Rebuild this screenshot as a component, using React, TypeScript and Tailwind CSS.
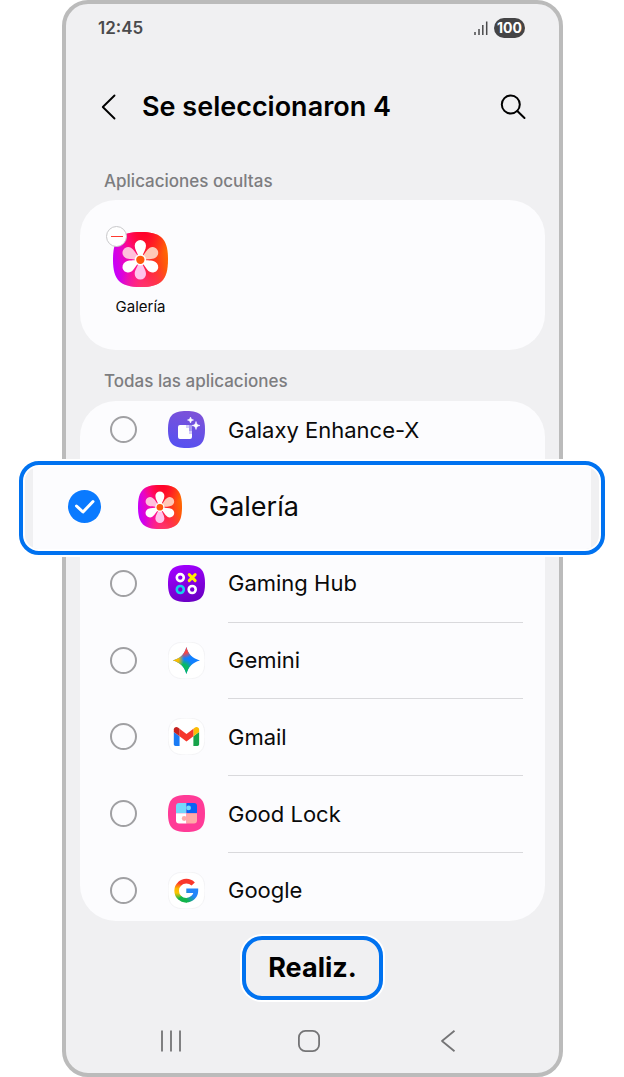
import type { ReactNode } from "react";

const SQUIRCLE =
  "M18.500 0C32.400 0 37 4.600 37 18.500S32.400 37 18.500 37 0 32.400 0 18.500 4.600 0 18.500 0Z";

function GalleryIcon({ id, className }: { id: string; className: string }) {
  const petal = "M-1.200 -1.500C-1.500 -4.500 -3.800 -6.600 -3.800 -9.500A3.800 3.800 0 0 1 3.800 -9.500C3.800 -6.600 1.500 -4.500 1.200 -1.500Z";
  return (
    <svg viewBox="0 0 37 37" className={className} aria-hidden="true">
      <defs>
        <linearGradient id={`${id}-base`} x1="0" y1="0.6" x2="1" y2="0.4">
          <stop offset="0" stopColor="#c400ff" />
          <stop offset="0.35" stopColor="#ff0aa0" />
          <stop offset="0.6" stopColor="#ff1a30" />
          <stop offset="1" stopColor="#ff6a00" />
        </linearGradient>
        <radialGradient id={`${id}-top`} cx="0.58" cy="0" r="0.5">
          <stop offset="0" stopColor="#ff002c" />
          <stop offset="1" stopColor="#ff002c" stopOpacity="0" />
        </radialGradient>
        <radialGradient id={`${id}-bottom`} cx="0.6" cy="1.05" r="0.5">
          <stop offset="0" stopColor="#ff3a6a" />
          <stop offset="1" stopColor="#ff3a6a" stopOpacity="0" />
        </radialGradient>
      </defs>
      <path d={SQUIRCLE} fill={`url(#${id}-base)`} />
      <path d={SQUIRCLE} fill={`url(#${id}-top)`} />
      <path d={SQUIRCLE} fill={`url(#${id}-bottom)`} />
      <g transform="translate(18.4 18.7)">
        <path d={petal} fill="#ffc9b8" transform="rotate(60)" />
        <path d={petal} fill="#ffc4ec" transform="rotate(180)" />
        <path d={petal} fill="#ffc0dc" transform="rotate(300)" />
        <path d={petal} fill="#fff" />
        <path d={petal} fill="#fff" transform="rotate(120)" />
        <path d={petal} fill="#fff" transform="rotate(240)" />
        <circle r="3.800" fill="#fff" />
        <circle r="2.800" fill="#ff5a0a" />
      </g>
    </svg>
  );
}

function AppIcon({ children }: { children: ReactNode }) {
  return (
    <svg viewBox="0 0 37 37" className="size-[37px] shrink-0" aria-hidden="true">
      {children}
    </svg>
  );
}

function WhiteTile() {
  return <path d={SQUIRCLE} fill="#fff" stroke="#f0f0f2" strokeWidth="0.8" />;
}

function EnhanceIcon() {
  return (
    <AppIcon>
      <defs>
        <linearGradient id="enhance" x1="0.7" y1="0" x2="0.4" y2="1">
          <stop offset="0" stopColor="#7e52d8" />
          <stop offset="1" stopColor="#5650f0" />
        </linearGradient>
      </defs>
      <path d={SQUIRCLE} fill="url(#enhance)" />
      <path d="M12 14h6v3h3v3h3v6a2 2 0 0 1-2 2H12a2 2 0 0 1-2-2V16a2 2 0 0 1 2-2Z" fill="#fff" />
      <path d="M18 14h3v3h-3zM21 20h3v3h-3z" fill="#d5cdfa" />
      <path d="M21 14h3v3h-3zM21 17h3v3h-3z" fill="#a89bf0" />
      <path d="M22.500 6c.5 2 1 2.500 3 3-2 .5-2.500 1-3 3-.5-2-1-2.500-3-3 2-.5 2.500-1 3-3ZM28 10.500c.7 2.800 1.300 3.400 4 4-2.700.6-3.300 1.200-4 4-.7-2.800-1.300-3.400-4-4 2.700-.6 3.300-1.200 4-4Z" fill="#fff" stroke="#fff" strokeWidth="0.600" strokeLinejoin="round" />
    </AppIcon>
  );
}

function GamingIcon() {
  return (
    <AppIcon>
      <defs>
        <linearGradient id="gaming" x1="0.3" y1="0" x2="0.6" y2="1">
          <stop offset="0" stopColor="#a200ff" />
          <stop offset="1" stopColor="#6a00c4" />
        </linearGradient>
      </defs>
      <path d={SQUIRCLE} fill="url(#gaming)" />
      <g fill="none" strokeWidth="2.6">
        <circle cx="12.300" cy="12.600" r="3.500" stroke="#fff" />
        <circle cx="12.300" cy="24.500" r="3.500" stroke="#14d2ea" />
        <circle cx="24.200" cy="24.500" r="3.500" stroke="#fff" />
        <path d="m21.200 9.600 6 6m0-6-6 6" stroke="#ffee00" strokeWidth="2.900" strokeLinecap="round" />
      </g>
    </AppIcon>
  );
}

function GeminiIcon() {
  const star = "M18.400 5C20.400 12.600 24.500 16.400 32 18.400 24.500 20.400 20.400 24.500 18.400 32 16.400 24.500 12.300 20.400 4.800 18.400 12.300 16.400 16.400 12.600 18.400 5Z";
  return (
    <AppIcon>
      <defs>
        <radialGradient id="gem-red" gradientUnits="userSpaceOnUse" cx="16" cy="6" r="10.500">
          <stop offset="0.500" stopColor="#f94543" />
          <stop offset="1" stopColor="#f94543" stopOpacity="0" />
        </radialGradient>
        <radialGradient id="gem-yellow" gradientUnits="userSpaceOnUse" cx="5" cy="17.500" r="11">
          <stop offset="0.500" stopColor="#f8bd00" />
          <stop offset="1" stopColor="#f8bd00" stopOpacity="0" />
        </radialGradient>
        <radialGradient id="gem-green" gradientUnits="userSpaceOnUse" cx="15" cy="28" r="11">
          <stop offset="0.500" stopColor="#08b962" />
          <stop offset="1" stopColor="#08b962" stopOpacity="0" />
        </radialGradient>
      </defs>
      <WhiteTile />
      <path d={star} fill="#1080ff" />
      <path d={star} fill="url(#gem-green)" />
      <path d={star} fill="url(#gem-red)" />
      <path d={star} fill="url(#gem-yellow)" />
    </AppIcon>
  );
}

function GmailIcon() {
  return (
    <AppIcon>
      <WhiteTile />
      <g transform="translate(5.800 9) scale(0.288) translate(-52 -42)">
        <path fill="#1a7cf5" d="M58 108h14V74L52 59v43c0 3.320 2.690 6 6 6" />
        <path fill="#17a34a" d="M120 108h14c3.320 0 6-2.690 6-6V59l-20 15" />
        <path fill="#fbbc04" d="M120 48v26l20-15v-8c0-7.420-8.470-11.650-14.400-7.200" />
        <path fill="#f5372c" d="M72 74V48l24 18 24-18v26L96 92" />
        <path fill="#c5221f" d="M52 51v8l20 15V48l-5.600-4.200c-5.940-4.450-14.400-.22-14.400 7.200" />
      </g>
    </AppIcon>
  );
}

function GoodLockIcon() {
  return (
    <AppIcon>
      <path d={SQUIRCLE} fill="#ff3b97" />
      <path d="M11 8h7.500v10.300H8V11a3 3 0 0 1 3-3Z" fill="#72d8fb" />
      <path d="M18.500 8H26a3 3 0 0 1 3 3v7.300H18.500Z" fill="#0763f5" />
      <path d="M8 18.300h10.500v10.200H11a3 3 0 0 1-3-3Z" fill="#fff" />
      <path d="M18.500 18.300H29v7.200a3 3 0 0 1-3 3h-7.500Z" fill="#ffaaa8" />
      <circle cx="20.600" cy="12.900" r="2.400" fill="#72d8fb" />
      <circle cx="16.200" cy="23.500" r="2.400" fill="#ffaaa8" />
    </AppIcon>
  );
}

function GoogleIcon() {
  return (
    <AppIcon>
      <defs>
        <linearGradient id="g-left" x1="0" y1="0" x2="0" y2="1">
          <stop offset="0" stopColor="#ff4a20" />
          <stop offset="0.350" stopColor="#fcb900" />
          <stop offset="0.650" stopColor="#fcc400" />
          <stop offset="1" stopColor="#3cb83a" />
        </linearGradient>
        <linearGradient id="g-right" x1="0" y1="1" x2="1" y2="0">
          <stop offset="0" stopColor="#12b54a" />
          <stop offset="0.600" stopColor="#2385fa" />
        </linearGradient>
      </defs>
      <WhiteTile />
      <g fill="none" strokeWidth="4.600">
        <path d="M18.300 28.300A9.600 9.600 0 0 0 27.900 18.700H18.300" stroke="url(#g-right)" />
        <path d="M12 11.400A9.600 9.600 0 0 0 12 26" stroke="url(#g-left)" />
        <path d="M25.200 12A9.600 9.600 0 0 0 11.500 11.900" stroke="#f9372c" />
        <path d="M11.500 25.500A9.600 9.600 0 0 0 19 28.300" stroke="#12b54a" />
      </g>
    </AppIcon>
  );
}

type AppRowProps = {
  name: string;
  icon: ReactNode;
  className: string;
  divider?: boolean;
};

function AppRow({ name, icon, className, divider }: AppRowProps) {
  return (
    <label className={`flex items-center pl-[30px] ${className}`}>
      <input
        type="checkbox"
        className="size-[27px] shrink-0 appearance-none rounded-full border-2 border-[#a0a0a3]"
      />
      <span className="ml-[31px] flex">{icon}</span>
      <span className="ml-[23px] text-[22px] leading-8">{name}</span>
      {divider && <span className="absolute right-[22px] bottom-0 left-[148px] h-px bg-[#d9d9dc]" />}
    </label>
  );
}

function StatusBar() {
  return (
    <div className="flex h-12 items-center justify-between pr-[34px] pl-8 text-[#4a4a4c]">
      <span className="pt-0.5 text-[17px] font-semibold">12:45</span>
      <div className="flex items-center gap-1.5">
        <svg viewBox="0 0 14 14" className="size-3.5" fill="none" stroke="currentColor" strokeWidth="1.500" aria-hidden="true">
          <path d="M1 11v3M5 8v6M8.800 4v10M12.700 .5V14" />
        </svg>
        <span className="flex h-5 w-[31px] items-center justify-center rounded-full bg-[#444446] text-sm font-bold text-white">
          100
        </span>
      </div>
    </div>
  );
}

function Header() {
  return (
    <header className="flex h-[110px] items-center pr-[33px] pl-[34px]">
      <button type="button" aria-label="Atrás">
        <svg viewBox="0 0 16 28" className="h-7 w-4" fill="none" stroke="#000" strokeWidth="1.900" strokeLinecap="round" strokeLinejoin="round" aria-hidden="true">
          <path d="M14.500 2.500 2.800 14l11.700 11.500" />
        </svg>
      </button>
      <h1 className="ml-[26px] text-[27px] leading-9 font-semibold text-black">Se seleccionaron 4</h1>
      <button type="button" aria-label="Buscar" className="ml-auto">
        <svg viewBox="0 0 26 26" className="size-[26px]" fill="none" stroke="#000" strokeWidth="2" strokeLinecap="round" aria-hidden="true">
          <circle cx="10.800" cy="10.500" r="9" />
          <path d="m17.300 17 7.200 7" />
        </svg>
      </button>
    </header>
  );
}

function HiddenApps() {
  return (
    <section className="mx-3.5">
      <h2 className="flex h-[38px] items-center pt-0.5 pl-6 text-[17px] font-medium text-[#7d7d80]">
        Aplicaciones ocultas
      </h2>
      <div className="flex h-[150px] rounded-[36px] bg-[#fcfcfe] pt-8 pl-[33px]">
        <div className="relative flex w-[55px] flex-col items-center">
          <GalleryIcon id="hidden" className="size-[55px]" />
          <span className="mt-2.5 text-[15px] leading-5">Galería</span>
          <button
            type="button"
            aria-label="Quitar Galería"
            className="absolute -top-1.5 -left-[7px] flex size-[21px] items-center justify-center rounded-full border border-[#c8c8ca] bg-white"
          >
            <span className="h-px w-3 bg-[#ff3b30]" />
          </button>
        </div>
      </div>
    </section>
  );
}

function SelectedRow() {
  return (
    <label className="relative z-10 -mr-[60px] -ml-[61px] flex h-[94px] rounded-[20px] border-4 border-[#0072f0] bg-white p-0.5 ring-2 ring-white">
      <span className="flex w-full overflow-hidden rounded-[14px] bg-[#f0f0f2] px-2">
        <span className="flex w-full items-center bg-[#fcfcfe] pb-[3px] pl-[35px]">
          <span className="relative flex">
            <input
              type="checkbox"
              defaultChecked
              className="size-[33px] appearance-none rounded-full bg-[#0a7aff]"
            />
            <svg viewBox="0 0 33 33" className="pointer-events-none absolute inset-0" fill="none" stroke="#fff" strokeWidth="3" strokeLinecap="round" strokeLinejoin="round" aria-hidden="true">
              <path d="m8.500 16 6.500 6 10-10.500" />
            </svg>
          </span>
          <GalleryIcon id="selected" className="ml-[37px] size-11" />
          <span className="ml-[27px] text-[27px] leading-9">Galería</span>
        </span>
      </span>
    </label>
  );
}

function AllApps() {
  return (
    <section className="mx-3.5">
      <h2 className="flex h-[51px] items-center pt-3 pl-6 text-[17px] font-medium text-[#7d7d80]">
        Todas las aplicaciones
      </h2>
      <div className="rounded-[36px] bg-[#fcfcfe]">
        <AppRow name="Galaxy Enhance-X" icon={<EnhanceIcon />} className="h-[60px] pb-[3px]" />
        <SelectedRow />
        <AppRow name="Gaming Hub" icon={<GamingIcon />} className="relative h-[68px] pb-3" divider />
        <AppRow name="Gemini" icon={<GeminiIcon />} className="relative h-[76px] pb-0.5" divider />
        <AppRow name="Gmail" icon={<GmailIcon />} className="relative h-[77px] pb-0.5" divider />
        <AppRow name="Good Lock" icon={<GoodLockIcon />} className="relative h-[77px] pb-0.5" divider />
        <AppRow name="Google" icon={<GoogleIcon />} className="h-[68px] pt-1.5" />
      </div>
    </section>
  );
}

function NavBar() {
  return (
    <nav className="grid h-[73px] grid-cols-3 items-center justify-items-center pt-2 pr-[42px] pl-9 text-[#747476]">
      <button type="button" aria-label="Recientes">
        <svg viewBox="0 0 22 22" className="size-[22px]" fill="none" stroke="currentColor" strokeWidth="1.800" aria-hidden="true">
          <path d="M2 .5v21M11 .5v21M20 .5v21" />
        </svg>
      </button>
      <button type="button" aria-label="Inicio">
        <svg viewBox="0 0 24 24" className="size-6" fill="none" stroke="currentColor" strokeWidth="1.800" aria-hidden="true">
          <rect x="1.900" y="1.900" width="20.200" height="20.200" rx="6.500" />
        </svg>
      </button>
      <button type="button" aria-label="Volver">
        <svg viewBox="0 0 16 24" className="h-6 w-4" fill="none" stroke="currentColor" strokeWidth="1.800" strokeLinejoin="round" aria-hidden="true">
          <path d="M14.500 1.700 2 12l12.500 10.300" />
        </svg>
      </button>
    </nav>
  );
}

export default function App() {
  return (
    <div className="min-h-screen bg-white pr-[61px] pl-[62px] font-[Inter,sans-serif] text-[#0a0a0a]">
      <main className="rounded-[26px] border-4 border-[#bbbbbb] bg-[#f0f0f2]">
        <StatusBar />
        <Header />
        <HiddenApps />
        <AllApps />
        <div className="mt-[15px] flex justify-center">
          <button
            type="button"
            className="h-16 w-[141px] rounded-[20px] border-4 border-[#0072f0] text-[27px] font-bold text-black ring-2 ring-white"
          >
            Realiz.
          </button>
        </div>
        <NavBar />
      </main>
    </div>
  );
}
